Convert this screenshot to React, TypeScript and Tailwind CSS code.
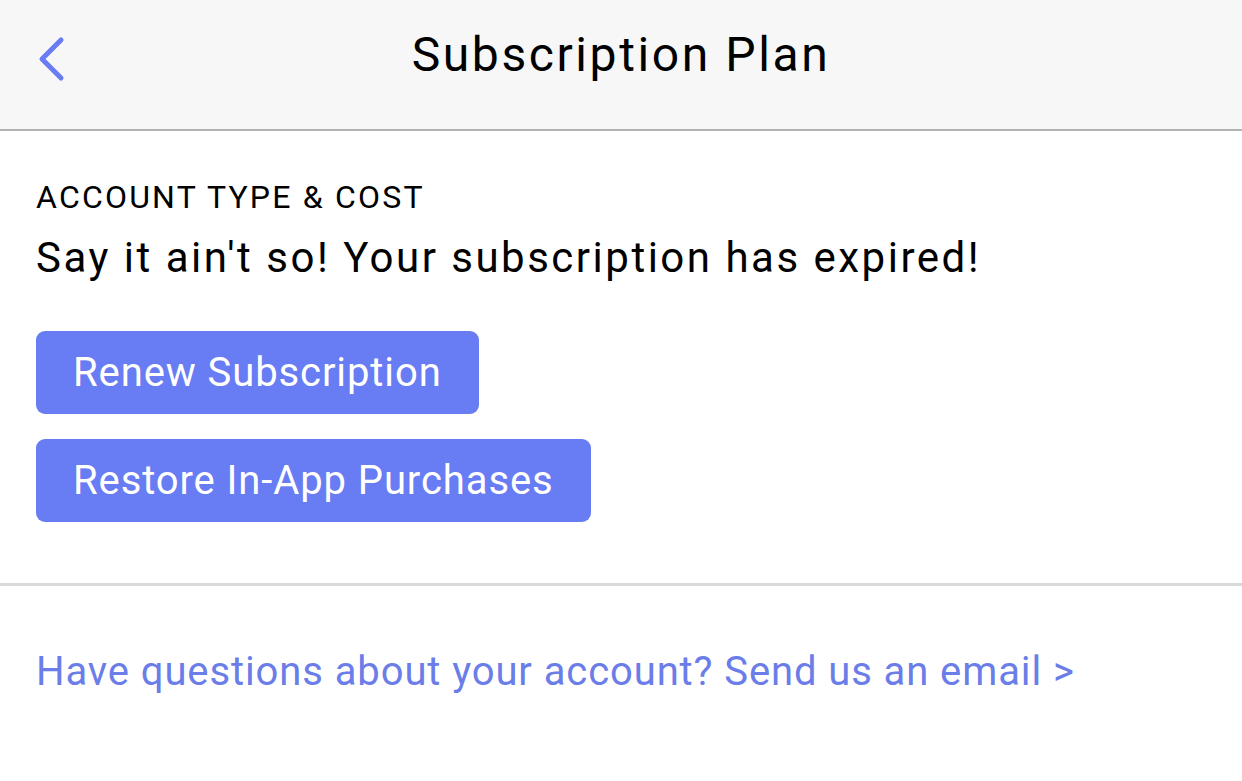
export default function App() {
  return (
    <div className="min-h-screen bg-white font-['Roboto',sans-serif] text-black">
      {/* header */}
      <div className="relative flex h-[131px] justify-center border-b-2 border-[#b3b3b3] bg-[#f7f7f7] pt-[31px]">
        <button className="absolute left-[36px] top-[36px] text-[#6a7cf2]">
          <svg width="30" height="46" viewBox="0 0 30 46" fill="none">
            <path d="M25 4 L6 23 L25 42" stroke="currentColor" strokeWidth="5" strokeLinecap="round" strokeLinejoin="round" />
          </svg>
        </button>
        <h1 className="text-[48px] leading-[48px] tracking-[2.6px]">Subscription Plan</h1>
      </div>

      {/* account section */}
      <div className="px-[36px] pt-[48px] pb-[61px]">
        <div className="text-[32px] leading-[36px] tracking-[2.2px]">ACCOUNT TYPE &amp; COST</div>
        <div className="mt-[19px] text-[42px] leading-[48px] tracking-[2.5px]">
          Say it ain't so! Your subscription has expired!
        </div>
        <div className="mt-[49px] flex flex-col items-start gap-[25px]">
          <button className="h-[83px] rounded-[9px] bg-[#687cf3] px-[37px] text-[40px] tracking-[0.9px] text-white">
            Renew Subscription
          </button>
          <button className="h-[83px] rounded-[9px] bg-[#687cf3] px-[37px] text-[40px] tracking-[0.9px] text-white">
            Restore In-App Purchases
          </button>
        </div>
      </div>

      <div className="h-[3px] bg-[#d9d9d9]" />

      {/* contact */}
      <div className="px-[36px] pt-[62px]">
        <a className="text-[40px] leading-[48px] tracking-[0.9px] text-[#6a7de8]">
          Have questions about your account? Send us an email &gt;
        </a>
      </div>
    </div>
  )
}
